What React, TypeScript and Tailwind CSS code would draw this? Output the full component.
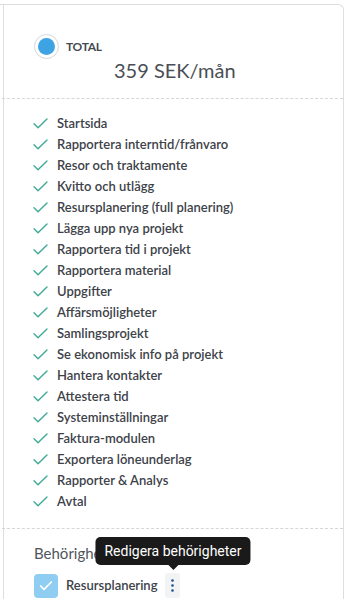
import { Check } from 'lucide-react';

const features = [
  'Startsida',
  'Rapportera interntid/frånvaro',
  'Resor och traktamente',
  'Kvitto och utlägg',
  'Resursplanering (full planering)',
  'Lägga upp nya projekt',
  'Rapportera tid i projekt',
  'Rapportera material',
  'Uppgifter',
  'Affärsmöjligheter',
  'Samlingsprojekt',
  'Se ekonomisk info på projekt',
  'Hantera kontakter',
  'Attestera tid',
  'Systeminställningar',
  'Faktura-modulen',
  'Exportera löneunderlag',
  'Rapporter & Analys',
  'Avtal',
];

function Tick() {
  return (
    <svg width="15" height="11" viewBox="0 0 15 11" fill="none" stroke="#3eab94" strokeWidth="1.4" strokeLinecap="round" strokeLinejoin="round">
      <path d="M1 5.8 L5 9.8 L14 1" />
    </svg>
  );
}

export default function App() {
  return (
    <div className="h-[599px] w-[350px] overflow-hidden bg-white pt-1 font-['Lato',sans-serif] text-[#3d4249]">
      <div className="w-[344px] rounded-tr-md border-t border-r border-[#dedede]">
        <div className="ml-[3px] border-l border-[#dedede]">
          {/* Totalsumma */}
          <div className="h-[93px] pt-[29px]">
            <div className="flex items-center pl-[30px]">
              <div className="flex h-[25px] w-[25px] items-center justify-center rounded-full border border-[#d4d8dd] bg-white">
                <div className="h-[17px] w-[17px] rounded-full bg-[#3ea3e3]" />
              </div>
              <span className="ml-[7px] text-[12px] font-bold tracking-tight text-[#454a50]">TOTAL</span>
            </div>
            <div className="-mt-[1px] pl-[110px] text-[20px] leading-6 text-[#4a4f55]">359 SEK/mån</div>
          </div>
        </div>
        <div className="-ml-[3px] border-t border-dashed border-[#d6d6d6]" />
        {/* Funktioner */}
        <div className="ml-[3px] border-l border-[#dedede]">
          <ul className="flex flex-col pt-[14px] pb-[16px] pl-[29px]">
            {features.map((f) => (
              <li key={f} className="flex h-[21px] items-center">
                <Tick />
                <span className="ml-[9px] text-[13px] font-semibold text-[#3d4249]">{f}</span>
              </li>
            ))}
          </ul>
        </div>
        <div className="-ml-[3px] border-t border-dashed border-[#d6d6d6]" />
        {/* Behörigheter */}
        <div className="ml-[3px] border-l border-[#dedede] pl-[30px] pt-[14px] pb-10">
          <div className="text-[15px] leading-5 text-[#50555b]">Behörigheter</div>
          <div className="mt-[10px] flex items-center">
            <div className="flex h-[24px] w-[24px] items-center justify-center rounded-[4px] bg-[#90cdf2]">
              <Check className="h-[16px] w-[16px] text-white" strokeWidth={2.5} />
            </div>
            <span className="ml-[8px] text-[13px] font-semibold text-[#3d4249]">Resursplanering</span>
            <div className="relative ml-[8px]">
              <button className="flex h-[25px] w-[15px] items-center justify-center rounded-[3px] bg-[#f2f3f5]">
                <svg width="3" height="13" viewBox="0 0 3 13" fill="#1e4f8f">
                  <circle cx="1.5" cy="1.5" r="1.3" />
                  <circle cx="1.5" cy="6.5" r="1.3" />
                  <circle cx="1.5" cy="11.5" r="1.3" />
                </svg>
              </button>
              <div className="absolute bottom-[33px] left-1/2 -translate-x-1/2 whitespace-nowrap rounded-[5px] bg-[#1a1a1a] px-[9px] py-[5px] font-['Roboto',sans-serif] text-[14px] leading-[18px] text-white">
                Redigera behörigheter
                <div className="absolute -bottom-[5px] left-1/2 h-0 w-0 -translate-x-1/2 border-x-[5px] border-t-[5px] border-x-transparent border-t-[#1a1a1a]" />
              </div>
            </div>
          </div>
        </div>
      </div>
    </div>
  );
}
